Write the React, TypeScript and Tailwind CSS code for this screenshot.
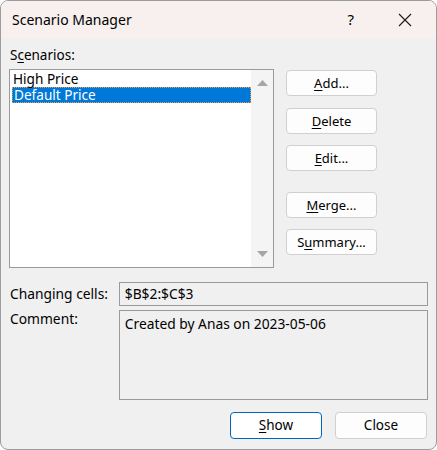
export default function App() {
  const font = { fontFamily: '"Noto Sans", "Open Sans", sans-serif' };

  return (
    <div
      className="w-[437px] h-[450px] bg-[#f0f0f0] border border-[#9c9c9c] rounded-[8px] overflow-hidden flex flex-col text-black"
      style={font}
    >
      {/* Title bar */}
      <div className="h-[37px] bg-[#f8f0ee] flex items-center shrink-0">
        <span className="ml-[11px] text-[14px] leading-none">Scenario Manager</span>
        <span className="ml-auto mr-[44px] text-[15px] leading-none">?</span>
        <svg width="14" height="14" viewBox="0 0 14 14" className="mr-[24px]">
          <path d="M1 1 L13 13 M13 1 L1 13" stroke="#1a1a1a" strokeWidth="1.1" />
        </svg>
      </div>

      <div className="px-[8px] flex flex-col text-[13.8px]">
        <div className="mt-[9px] h-[16px] leading-[16px] pl-[1px] text-[13.5px]">
          S<u className="underline-offset-2">c</u>enarios:
        </div>

        {/* Listbox + buttons */}
        <div className="flex mt-[6px]">
          <div className="w-[265px] h-[199px] border border-[#9a9a9a] bg-white flex">
            <div className="flex-1 pt-[1px] pl-[2px]">
              <div className="h-[16px] leading-[16px] pl-[1px] text-[13.6px]">High Price</div>
              <div className="h-[16px] leading-[14px] pl-[1px] text-[13.6px] bg-[#0078d7] text-white border border-dotted border-[#e0a050]">
                Default Price
              </div>
            </div>
            <div className="w-[22px] bg-[#f4f4f4] flex flex-col items-center justify-between py-[10px]">
              <svg width="11" height="6" viewBox="0 0 11 6">
                <path d="M0 6 L5.5 0 L11 6 Z" fill="#a6a6a6" />
              </svg>
              <svg width="11" height="6" viewBox="0 0 11 6">
                <path d="M0 0 L5.5 6 L11 0 Z" fill="#a6a6a6" />
              </svg>
            </div>
          </div>

          <div className="ml-[12px] flex flex-col">
            <Btn className="mt-[1px]">
              <u className="underline-offset-2">A</u>dd...
            </Btn>
            <Btn className="mt-[12px]">
              <u className="underline-offset-2">D</u>elete
            </Btn>
            <Btn className="mt-[11px]">
              <u className="underline-offset-2">E</u>dit...
            </Btn>
            <Btn className="mt-[21px]">
              <u className="underline-offset-2">M</u>erge...
            </Btn>
            <Btn className="mt-[11px]">
              S<u className="underline-offset-2">u</u>mmary...
            </Btn>
          </div>
        </div>

        {/* Changing cells */}
        <div className="flex mt-[14px] items-center">
          <div className="w-[110px] pl-[1px]">Changing cells:</div>
          <div className="w-[310px] h-[24px] border border-[#9a9a9a] flex items-center pl-[5px]">
            $B$2:$C$3
          </div>
        </div>

        {/* Comment */}
        <div className="flex mt-[4px]">
          <div className="w-[110px] pl-[1px] leading-[18px]">Comment:</div>
          <div className="w-[310px] h-[90px] border border-[#9a9a9a] pl-[5px] pt-[3px]">
            Created by Anas on 2023-05-06
          </div>
        </div>

        {/* Bottom buttons */}
        <div className="flex justify-end mt-[12px] pr-[1px] gap-[13px]">
          <button className="w-[92px] h-[27px] rounded-[4px] bg-white border border-[#0067c0] text-[13.5px] leading-none">
            <u className="underline-offset-2">S</u>how
          </button>
          <button className="w-[92px] h-[27px] rounded-[4px] bg-[#fdfdfd] border border-[#d0d0d0] text-[13.5px] leading-none">
            Close
          </button>
        </div>
      </div>
    </div>
  );
}

function Btn({ children, className = "" }: { children: React.ReactNode; className?: string }) {
  return (
    <button
      className={`w-[91px] h-[26px] rounded-[4px] bg-[#fdfdfd] border border-[#d0d0d0] text-[13px] leading-none ${className}`}
    >
      {children}
    </button>
  );
}
